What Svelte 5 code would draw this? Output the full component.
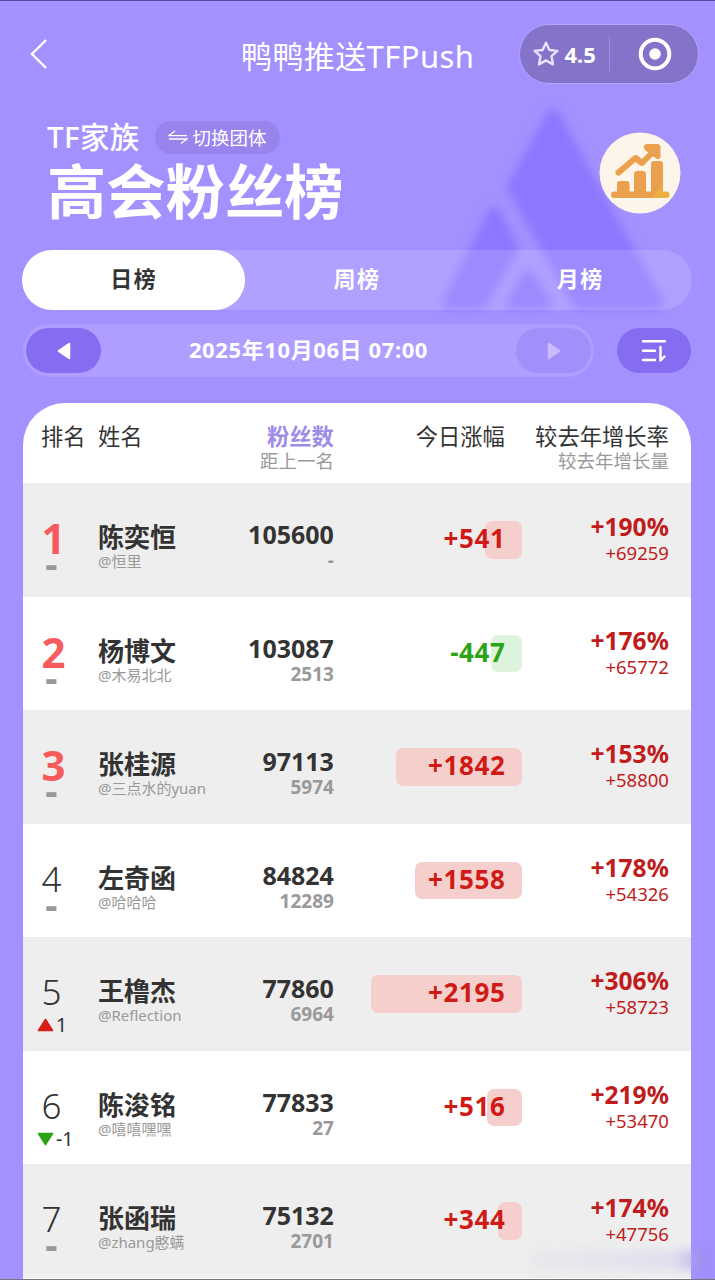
<script>
  const watermark = '微信公众号:鸭鸭推送TFPush';
  const tabs = ['日榜', '周榜', '月榜'];
  let active = '日榜';

  // px of bar per follower gained or lost today
  const BAR_SCALE = 0.0686;

  const members = [
    { name: '陈奕恒', alias: '@恒里', fans: 105600, gap: '-', today: 541, rate: 190, growth: 69259, move: 0 },
    { name: '杨博文', alias: '@木易北北', fans: 103087, gap: 2513, today: -447, rate: 176, growth: 65772, move: 0 },
    { name: '张桂源', alias: '@三点水的yuan', fans: 97113, gap: 5974, today: 1842, rate: 153, growth: 58800, move: 0 },
    { name: '左奇函', alias: '@哈哈哈', fans: 84824, gap: 12289, today: 1558, rate: 178, growth: 54326, move: 0 },
    { name: '王橹杰', alias: '@Reflection', fans: 77860, gap: 6964, today: 2195, rate: 306, growth: 58723, move: 1 },
    { name: '陈浚铭', alias: '@嘻嘻嘿嘿', fans: 77833, gap: 27, today: 516, rate: 219, growth: 53470, move: -1 },
    { name: '张函瑞', alias: '@zhang憨螨', fans: 75132, gap: 2701, today: 344, rate: 174, growth: 47756, move: 0 }
  ];

  const signed = (n) => (n > 0 ? `+${n}` : `${n}`);
  const barWidth = (n) => Math.abs(n) * BAR_SCALE;
</script>

<div class="page">
  <svg class="peaks" width="260" height="240" viewBox="430 90 260 240">
    <g fill="#8c77ff" stroke="#8c77ff" stroke-width="12" stroke-linejoin="round">
      <path d="M553 115L513 187L579 303H657Z" />
      <path d="M494 213L449 303H480L512 248Z" />
      <path d="M528 277L513 303H544Z" />
    </g>
  </svg>

  <header class="nav">
    <svg class="back" width="20" height="32" viewBox="0 0 20 32">
      <path d="M18 2L4 16L18 30" fill="none" stroke="#fff" stroke-width="2.4" />
    </svg>
    <h1>鸭鸭推送TFPush</h1>
    <div class="capsule">
      <svg width="26" height="26" viewBox="0 0 26 26">
        <path
          d="M13 1.8L16.4 9L24.4 9.9L18.5 15.2L20 23.4L13 19.4L6 23.4L7.5 15.2L1.6 9.9L9.6 9Z"
          fill="none"
          stroke="#e9e2ff"
          stroke-width="2.4"
          stroke-linejoin="round"
        />
      </svg>
      <b>4.5</b>
      <i></i>
      <svg class="target" width="34" height="34" viewBox="0 0 34 34">
        <circle cx="17" cy="17" r="14.3" fill="none" stroke="#fff" stroke-width="4" />
        <circle cx="17" cy="17" r="5.8" fill="#fff" />
      </svg>
    </div>
  </header>

  <section class="hero">
    <div class="titles">
      <div class="group">
        <span>TF家族</span>
        <button class="switch">
          <svg width="20" height="14" viewBox="0 0 20 14">
            <path d="M7 1L1 5.6H19M1 9H19L13 13.4" fill="none" stroke="#fff" stroke-width="1.3" />
          </svg>
          切换团体
        </button>
      </div>
      <h2>高会粉丝榜</h2>
    </div>
    <svg class="badge" width="82" height="82" viewBox="0 0 82 82">
      <defs>
        <linearGradient id="gold" gradientUnits="userSpaceOnUse" x1="50" y1="45" x2="66" y2="58">
          <stop offset="0.72" stop-color="#eba04d" />
          <stop offset="0.8" stop-color="#ebb040" />
        </linearGradient>
      </defs>
      <circle cx="41" cy="41" r="40.5" fill="#fdf4ea" />
      <g fill="url(#gold)">
        <rect x="18" y="49" width="12.5" height="15" rx="3" />
        <rect x="35" y="39" width="12" height="25" rx="3" />
        <rect x="52" y="29" width="12" height="35" rx="3" />
        <rect x="12" y="59.5" width="58.5" height="6.5" rx="3.2" />
      </g>
      <path
        d="M19.5 40.5L36.5 26L43 31L57 17"
        fill="none"
        stroke="#eba04d"
        stroke-width="6"
        stroke-linecap="round"
        stroke-linejoin="round"
      />
      <path d="M47 12H58Q61.5 12 61.5 15.5V25Q60 29 56.5 26L46 18Q43 14 47 12Z" fill="#eba04d" />
    </svg>
  </section>

  <div class="tabs">
    {#each tabs as tab}
      <button class:active={tab === active} on:click={() => (active = tab)}>{tab}</button>
    {/each}
  </div>

  <div class="toolbar">
    <div class="date">
      <button class="step">
        <svg width="14" height="18" viewBox="0 0 14 18">
          <path d="M12.5 1.5V16.5L1.5 9Z" fill="#fff" stroke="#fff" stroke-width="1.6" stroke-linejoin="round" />
        </svg>
      </button>
      <span>2025年10月06日 07:00</span>
      <button class="step disabled">
        <svg width="14" height="18" viewBox="0 0 14 18">
          <path d="M1.5 1.5V16.5L12.5 9Z" fill="#c9bbff" stroke="#c9bbff" stroke-width="1.6" stroke-linejoin="round" />
        </svg>
      </button>
    </div>
    <button class="sort">
      <svg width="26" height="24" viewBox="0 0 26 24">
        <path
          d="M2 2.3H24M2 11.7H14M2 21H14M19.5 8V21.5L23.5 17.5"
          fill="none"
          stroke="#fff"
          stroke-width="2.4"
          stroke-linecap="round"
          stroke-linejoin="round"
        />
      </svg>
    </button>
  </div>

  <main class="board">
    <div class="row head">
      <div class="rank">排名</div>
      <div class="who">姓名</div>
      <div class="fans"><b>粉丝数</b><small>距上一名</small></div>
      <div class="today">今日涨幅</div>
      <div class="year">较去年增长率<small>较去年增长量</small></div>
    </div>

    {#each members as m, i}
      <div class="row member">
        <div class="rank" class:top={i < 3}>
          <span class="place">{i + 1}</span>
          {#if m.move === 0}
            <span class="still">-</span>
          {:else}
            <span class="move">
              <svg width="17" height="14" viewBox="0 0 17 14">
                {#if m.move > 0}
                  <path d="M8.5 1.5L15.5 12.5H1.5Z" fill="#d81e15" stroke="#d81e15" stroke-width="1.6" stroke-linejoin="round" />
                {:else}
                  <path d="M8.5 12.5L15.5 1.5H1.5Z" fill="#2ba315" stroke="#2ba315" stroke-width="1.6" stroke-linejoin="round" />
                {/if}
              </svg>
              {m.move}
            </span>
          {/if}
        </div>
        <div class="who">
          <b>{m.name}</b>
          <small>{m.alias}</small>
        </div>
        <div class="fans">
          <b>{m.fans}</b>
          <small>{m.gap}</small>
        </div>
        <div class="today" class:down={m.today < 0}>
          <i style="width: {barWidth(m.today)}px"></i>
          <b>{signed(m.today)}</b>
        </div>
        <div class="year">
          <b>+{m.rate}%</b>
          <small>{signed(m.growth)}</small>
        </div>
      </div>
    {/each}

    <div class="watermark first">{watermark}</div>
    <div class="watermark second">{watermark}</div>
  </main>

  <div class="smudge"></div>
</div>

<style>
  :global(body) {
    background: #a391ff;
  }

  .page {
    position: relative;
    box-sizing: border-box;
    width: 715px;
    height: 1280px;
    overflow: hidden;
    border-top: 1px solid #54459a;
    border-bottom: 1px solid #77747f;
    background: #a391ff;
    color: #333;
    font-family: 'Noto Sans', 'Noto Sans CJK SC', sans-serif;
  }

  button {
    display: flex;
    align-items: center;
    justify-content: center;
    margin: 0;
    padding: 0;
    border: 0;
    color: #fff;
    font: inherit;
  }

  h1,
  h2 {
    margin: 0;
    color: #fff;
  }

  svg {
    display: block;
    flex: none;
  }

  small {
    font-size: 18.5px;
  }

  .peaks {
    position: absolute;
    left: 430px;
    top: 89px;
    filter: blur(4.5px);
  }

  .nav {
    position: relative;
    display: flex;
    align-items: center;
    height: 106px;
    padding: 0 16px 0 28px;
  }

  .back {
    margin-right: 193px;
  }

  h1 {
    width: 279px;
    padding-top: 3px;
    font-size: 31px;
    font-weight: 400;
    line-height: 40px;
    letter-spacing: 0.4px;
    white-space: nowrap;
  }

  .capsule {
    display: flex;
    align-items: center;
    box-sizing: border-box;
    width: 180px;
    height: 60px;
    padding-left: 13px;
    border: 1px solid #b5a6f8;
    border-radius: 30px;
    background: #8572c9;
    color: #fff;
  }

  .capsule b {
    margin-left: 5px;
    font-size: 22px;
    line-height: 30px;
  }

  .capsule i {
    width: 1px;
    height: 34px;
    margin: 0 28px 0 13px;
    background: #a08fe0;
  }

  .hero {
    position: relative;
    display: flex;
    justify-content: space-between;
    height: 142px;
    padding: 0 34px 0 47px;
  }

  .group {
    display: flex;
    align-items: center;
    height: 60px;
    color: #fff;
    font-size: 29px;
    letter-spacing: 0.4px;
  }

  .group span {
    width: 94px;
    margin-top: -3px;
    font-size: 29.5px;
    font-weight: 500;
  }

  .switch {
    gap: 4px;
    width: 125px;
    height: 33px;
    margin-left: 14px;
    border-radius: 17px;
    background: #9984ee;
    font-size: 18.5px;
    letter-spacing: 0;
  }

  .titles h2 {
    margin-top: -14px;
    font-size: 59.3px;
    line-height: 76px;
  }

  .badge {
    margin-top: 25px;
  }

  .tabs {
    position: relative;
    display: flex;
    width: 670px;
    height: 60px;
    margin: 1px 0 0 22px;
    border-radius: 30px;
    background: rgba(255, 255, 255, 0.14);
  }

  .tabs button {
    flex: 1;
    padding-bottom: 6px;
    border-radius: 30px;
    background: none;
    font-size: 22px;
    font-weight: 700;
    letter-spacing: 1.5px;
  }

  .tabs .active {
    background: #fff;
    color: #333;
  }

  .toolbar {
    display: flex;
    align-items: center;
    justify-content: space-between;
    margin: 14px 24px 0 23px;
  }

  .date {
    display: flex;
    align-items: center;
    justify-content: space-between;
    box-sizing: border-box;
    width: 571px;
    height: 53px;
    padding: 0 3px;
    border-radius: 27px;
    background: #af9eff;
    color: #fff;
    font-size: 22px;
    font-weight: 700;
    letter-spacing: 0.6px;
  }

  .date span {
    padding-bottom: 6px;
  }

  .step,
  .sort {
    width: 75px;
    height: 45px;
    border-radius: 23px;
    background: #856cf0;
  }

  .sort {
    width: 74px;
  }

  .disabled {
    background: #a38ffa;
  }

  .board {
    position: relative;
    width: 668px;
    height: 880px;
    margin: 26px 0 0 23.4px;
    overflow: hidden;
    border-radius: 42px 42px 0 0;
    background: #fff;
  }

  .row {
    display: grid;
    grid-template-columns: 57px 96px 140px 188px 147px;
    padding-left: 17.5px;
  }

  .head {
    height: 80px;
    box-sizing: border-box;
    padding-top: 20px;
    font-size: 22.3px;
    line-height: 28px;
    white-space: nowrap;
  }

  .head small {
    display: block;
    line-height: 20px;
    color: #999;
  }

  .head b {
    color: #9d8ce8;
  }

  .head .today {
    padding-right: 17px;
  }

  .fans,
  .today,
  .year {
    text-align: right;
  }

  .member {
    height: 113.5px;
  }

  .member:nth-child(even) {
    background: #eee;
  }

  .member > div {
    display: flex;
    flex-direction: column;
    white-space: nowrap;
  }

  .member .rank {
    align-items: flex-start;
  }

  .place {
    width: 21px;
    margin-top: 34px;
    font-size: 35px;
    font-weight: 350;
    line-height: 42px;
    text-align: center;
  }

  .top .place {
    width: 25px;
    color: #f75c5c;
    font-size: 42px;
    font-weight: 700;
  }

  .still {
    width: 21px;
    color: #999;
    font-size: 38px;
    font-weight: 700;
    line-height: 20px;
    margin-top: -6px;
    text-align: center;
  }

  .move {
    display: flex;
    align-items: center;
    gap: 2px;
    margin: 0 0 0 -4px;
    font-size: 19.5px;
    line-height: 24px;
  }

  .member .who {
    padding-top: 38px;
  }

  .who b {
    font-size: 26px;
    line-height: 32px;
  }

  .who small {
    color: #999;
    font-size: 15px;
    line-height: 16px;
  }

  .member .fans {
    padding-top: 36px;
  }

  .member .fans b {
    font-size: 25px;
    line-height: 30px;
  }

  .member .fans small {
    color: #999;
    font-size: 19px;
    font-weight: 700;
    line-height: 22px;
  }

  .member .today {
    position: relative;
    align-items: flex-end;
    padding-top: 38px;
  }

  .today i {
    height: 37.5px;
    border-radius: 7px;
    background: #f4cfcc;
  }

  /* the figure is printed over its bar */
  .member .today b {
    position: absolute;
    right: 17px;
    top: 37px;
    color: #d01a16;
    font-size: 26px;
    line-height: 36px;
    letter-spacing: 0.6px;
    margin-right: -0.6px;
  }

  .today.down i {
    background: #def3db;
  }

  .member .today.down b {
    color: #2ba315;
  }

  .member .year {
    padding-top: 29px;
    color: #c01c1c;
  }

  .year b {
    font-size: 24.6px;
    line-height: 30px;
  }

  .member .year small {
    line-height: 21px;
  }

  .watermark {
    position: absolute;
    left: 154px;
    color: rgba(0, 0, 0, 0.025);
    font-size: 31.4px;
    line-height: 40px;
    white-space: nowrap;
    transform: rotate(-9.5deg);
  }

  .first {
    top: 138px;
  }

  .second {
    top: 429px;
  }

  .smudge {
    position: absolute;
    left: 530px;
    top: 1249px;
    width: 178px;
    height: 20px;
    background: linear-gradient(90deg, rgba(225, 222, 232, 0.3), rgba(215, 207, 240, 0.5) 80%, rgba(150, 132, 225, 0.6));
    filter: blur(4px);
  }
</style>
